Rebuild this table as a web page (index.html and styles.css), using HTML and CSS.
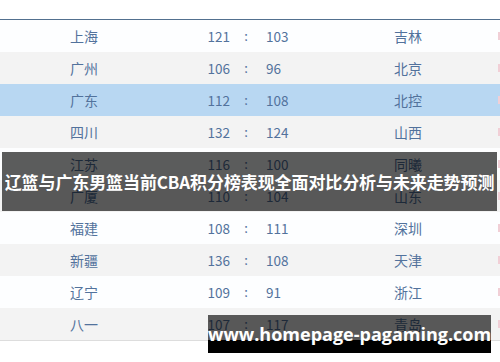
FILE: index.html
```html
<!DOCTYPE html>
<html lang="zh-CN">
<head>
<meta charset="utf-8">
<title>CBA积分榜</title>
<link rel="stylesheet" href="styles.css">
</head>
<body>
<div class="page">
  <div class="table">
    <div class="row"><span class="team">上海</span><span class="sl">121</span><span class="colon">:</span><span class="sr">103</span><span class="team2">吉林</span><span class="mark"></span></div>
    <div class="row alt"><span class="team">广州</span><span class="sl">106</span><span class="colon">:</span><span class="sr">96</span><span class="team2">北京</span><span class="mark"></span></div>
    <div class="row hl"><span class="team">广东</span><span class="sl">112</span><span class="colon">:</span><span class="sr">108</span><span class="team2">北控</span><span class="mark"></span></div>
    <div class="row alt"><span class="team">四川</span><span class="sl">132</span><span class="colon">:</span><span class="sr">124</span><span class="team2">山西</span><span class="mark"></span></div>
    <div class="row"><span class="team">江苏</span><span class="sl">116</span><span class="colon">:</span><span class="sr">100</span><span class="team2">同曦</span><span class="mark"></span></div>
    <div class="row alt"><span class="team">广厦</span><span class="sl">110</span><span class="colon">:</span><span class="sr">104</span><span class="team2">山东</span><span class="mark"></span></div>
    <div class="row"><span class="team">福建</span><span class="sl">108</span><span class="colon">:</span><span class="sr">111</span><span class="team2">深圳</span><span class="mark"></span></div>
    <div class="row alt"><span class="team">新疆</span><span class="sl">136</span><span class="colon">:</span><span class="sr">108</span><span class="team2">天津</span><span class="mark"></span></div>
    <div class="row"><span class="team">辽宁</span><span class="sl">109</span><span class="colon">:</span><span class="sr">91</span><span class="team2">浙江</span><span class="mark"></span></div>
    <div class="row alt last"><span class="team">八一</span><span class="sl">107</span><span class="colon">:</span><span class="sr">117</span><span class="team2">青岛</span><span class="mark"></span></div>
  </div>
  <div class="banner">辽篮与广东男篮当前CBA积分榜表现全面对比分析与未来走势预测</div>
  <div class="watermark">www.homepage-pagaming.com</div>
</div>
</body>
</html>
```
FILE: styles.css
```css
html, body {
  margin: 0;
  padding: 0;
  background: #ffffff;
}
.page {
  position: relative;
  width: 500px;
  height: 362px;
  overflow: hidden;
  font-family: "Noto Sans CJK SC", "Noto Sans", sans-serif;
}
.table {
  margin-top: 19px;
  border-top: 1px solid #52708f;
  border-bottom: 1px solid #dddddd;
}
.row {
  display: grid;
  grid-template-columns: 168px 62px 32px 58px 1fr 4px;
  align-items: center;
  height: 32px;
  background: #fdfeff;
  color: #52729c;
  font-size: 14px;
  line-height: 32px;
}
.row.alt { background: #f3f3f3; }
.row.hl { background: #b8d7f2; }
.team, .team2 { text-align: center; }
.sl { text-align: right; font-size: 13.5px; }
.colon { text-align: center; font-size: 13px; }
.sr { text-align: left; padding-left: 4px; font-size: 13.5px; }
.mark {
  justify-self: end;
  width: 2px;
  height: 8px;
  background: #f1cfd6;
}
.banner {
  position: absolute;
  left: 2px;
  top: 152px;
  width: 495px;
  height: 59px;
  background: rgba(0, 0, 0, 0.64);
  color: #ffffff;
  font-weight: 700;
  font-size: 17px;
  line-height: 59px;
  text-align: center;
  white-space: nowrap;
  letter-spacing: -0.1px;
}
.watermark {
  position: absolute;
  left: 208px;
  top: 315px;
  width: 283px;
  height: 38px;
  background: linear-gradient(to bottom, rgba(0, 0, 0, 0.64) 0, rgba(0, 0, 0, 0.64) 25px, #000000 25px);
  color: #ffffff;
  font-family: "Open Sans", "Noto Sans", sans-serif;
  font-weight: 700;
  font-size: 18px;
  line-height: 38px;
  text-align: center;
  white-space: nowrap;
}
```
